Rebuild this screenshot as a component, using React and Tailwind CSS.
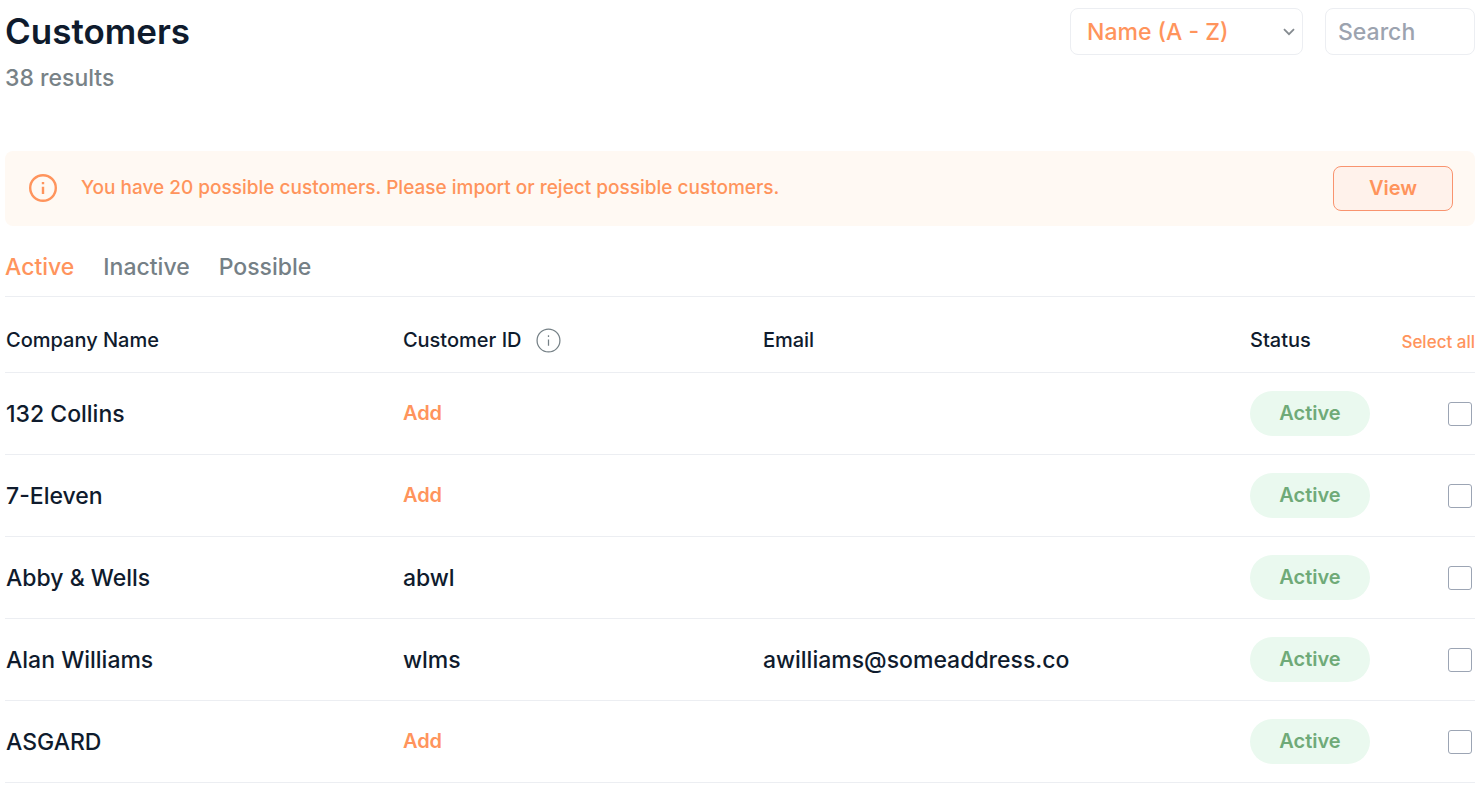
import { useState } from "react";

const tabs = ["Active", "Inactive", "Possible"];

const customers = [
  { name: "132 Collins", customerId: "", email: "" },
  { name: "7-Eleven", customerId: "", email: "" },
  { name: "Abby & Wells", customerId: "abwl", email: "" },
  { name: "Alan Williams", customerId: "wlms", email: "awilliams@someaddress.co" },
  { name: "ASGARD", customerId: "", email: "" },
];

function InfoIcon({ className, strokeWidth }) {
  return (
    <svg viewBox="0 0 28 28" fill="none" stroke="currentColor" strokeWidth={strokeWidth} className={className} aria-hidden="true">
      <circle cx="14" cy="14" r="12.8" />
      <path d="M14 12.8v7.2M14 8v2.2" />
    </svg>
  );
}

export default function App() {
  const [tab, setTab] = useState("Active");
  const [selected, setSelected] = useState([]);

  const toggle = (name) => {
    setSelected((prev) =>
      prev.includes(name) ? prev.filter((n) => n !== name) : [...prev, name]
    );
  };

  const toggleAll = () => {
    setSelected((prev) =>
      prev.length === customers.length ? [] : customers.map((c) => c.name)
    );
  };

  return (
    <main className="bg-white px-[5px] pt-2 font-['Inter',sans-serif] font-medium text-[#0f1b2d]">
      {/* Title and filters */}
      <header className="flex items-start justify-between">
        <div>
          <h1 className="text-[35px] leading-[46px] font-semibold">Customers</h1>
          <p className="text-[23px] leading-[48px] text-[#788287]">38 results</p>
        </div>
        <div className="flex gap-[22px]">
          <div className="relative">
            <select
              aria-label="Sort by"
              className="h-[47px] w-[233px] appearance-none rounded-lg border border-[#eceef2] bg-white pt-0.5 pl-4 text-[23px] text-[#ff945c]"
            >
              <option>Name (A - Z)</option>
              <option>Name (Z - A)</option>
            </select>
            <svg
              viewBox="0 0 12 8"
              fill="none"
              stroke="#858b90"
              strokeWidth="1.8"
              className="pointer-events-none absolute top-5 right-2 h-2 w-3"
              aria-hidden="true"
            >
              <path d="M1 1.2l5 5 5-5" />
            </svg>
          </div>
          <input
            type="text"
            aria-label="Search"
            placeholder="Search"
            className="h-[47px] w-[150px] rounded-lg border border-[#eceef2] px-3 text-[23px] placeholder:text-[#9ca3af]"
          />
        </div>
      </header>

      {/* Possible customers notice */}
      <section className="mt-[49px] flex h-[75px] items-center rounded-lg bg-[#fff9f3] pr-[22px] pl-6 text-[20px] text-[#ff945c]">
        <InfoIcon className="mb-0.5 size-7" strokeWidth="2.4" />
        <p className="ml-6 flex-1 text-[19px]">
          You have 20 possible customers. Please import or reject possible customers.
        </p>
        <button
          type="button"
          className="h-[45px] w-[120px] rounded-lg border border-[#f9946f] bg-[#fff2eb] pb-px font-semibold"
        >
          View
        </button>
      </section>

      <nav className="flex h-[71px] gap-[29px] border-b border-[#eceef2] pt-3 text-[23px]">
        {tabs.map((t) => (
          <button
            key={t}
            type="button"
            onClick={() => setTab(t)}
            className={t === tab ? "text-[#ff945c]" : "text-[#758086]"}
          >
            {t}
          </button>
        ))}
      </nav>

      <table className="w-full table-fixed border-collapse text-left">
        <thead>
          <tr className="h-[75px] border-b border-[#eceef2] text-[20px]">
            <th className="w-[27%] p-0 pt-3 pl-px font-medium">Company Name</th>
            <th className="w-[360px] p-0 pt-3 pl-px font-medium">
              <span className="flex items-center gap-3.5">
                Customer ID
                <InfoIcon className="size-[25px] text-[#758086]" strokeWidth="1.4" />
              </span>
            </th>
            <th className="p-0 pt-3 pl-px font-medium">Email</th>
            <th className="w-[120px] p-0 pt-3 font-medium">Status</th>
            <th className="w-[105px] p-0 pt-3.5 text-right font-medium">
              <button type="button" onClick={toggleAll} className="text-[17px] text-[#ff945c]">
                Select all
              </button>
            </th>
          </tr>
        </thead>
        <tbody>
          {customers.map((c) => (
            <tr key={c.name} className="h-[82px] border-b border-[#eceef2] text-[23px]">
              <td className="p-0 pt-0.5 pl-px">{c.name}</td>
              <td className="p-0 pl-px">
                {c.customerId ? (
                  <span className="block pt-0.5">{c.customerId}</span>
                ) : (
                  <button type="button" className="block text-[20px] font-semibold text-[#ff945c]">
                    Add
                  </button>
                )}
              </td>
              <td className="p-0 pt-0.5 pl-px">{c.email}</td>
              <td className="p-0">
                <span className="flex h-[45px] items-center justify-center rounded-full bg-[#eaf9ef] text-[20px] font-semibold text-[#6faa78]">
                  Active
                </span>
              </td>
              <td className="p-0 pt-0.5 pr-[3px]">
                <input
                  type="checkbox"
                  aria-label={`Select ${c.name}`}
                  checked={selected.includes(c.name)}
                  onChange={() => toggle(c.name)}
                  className="ml-auto block size-6 appearance-none rounded-[3px] border border-[#9ca5b4] bg-white checked:bg-[#ff945c]"
                />
              </td>
            </tr>
          ))}
        </tbody>
      </table>
    </main>
  );
}
